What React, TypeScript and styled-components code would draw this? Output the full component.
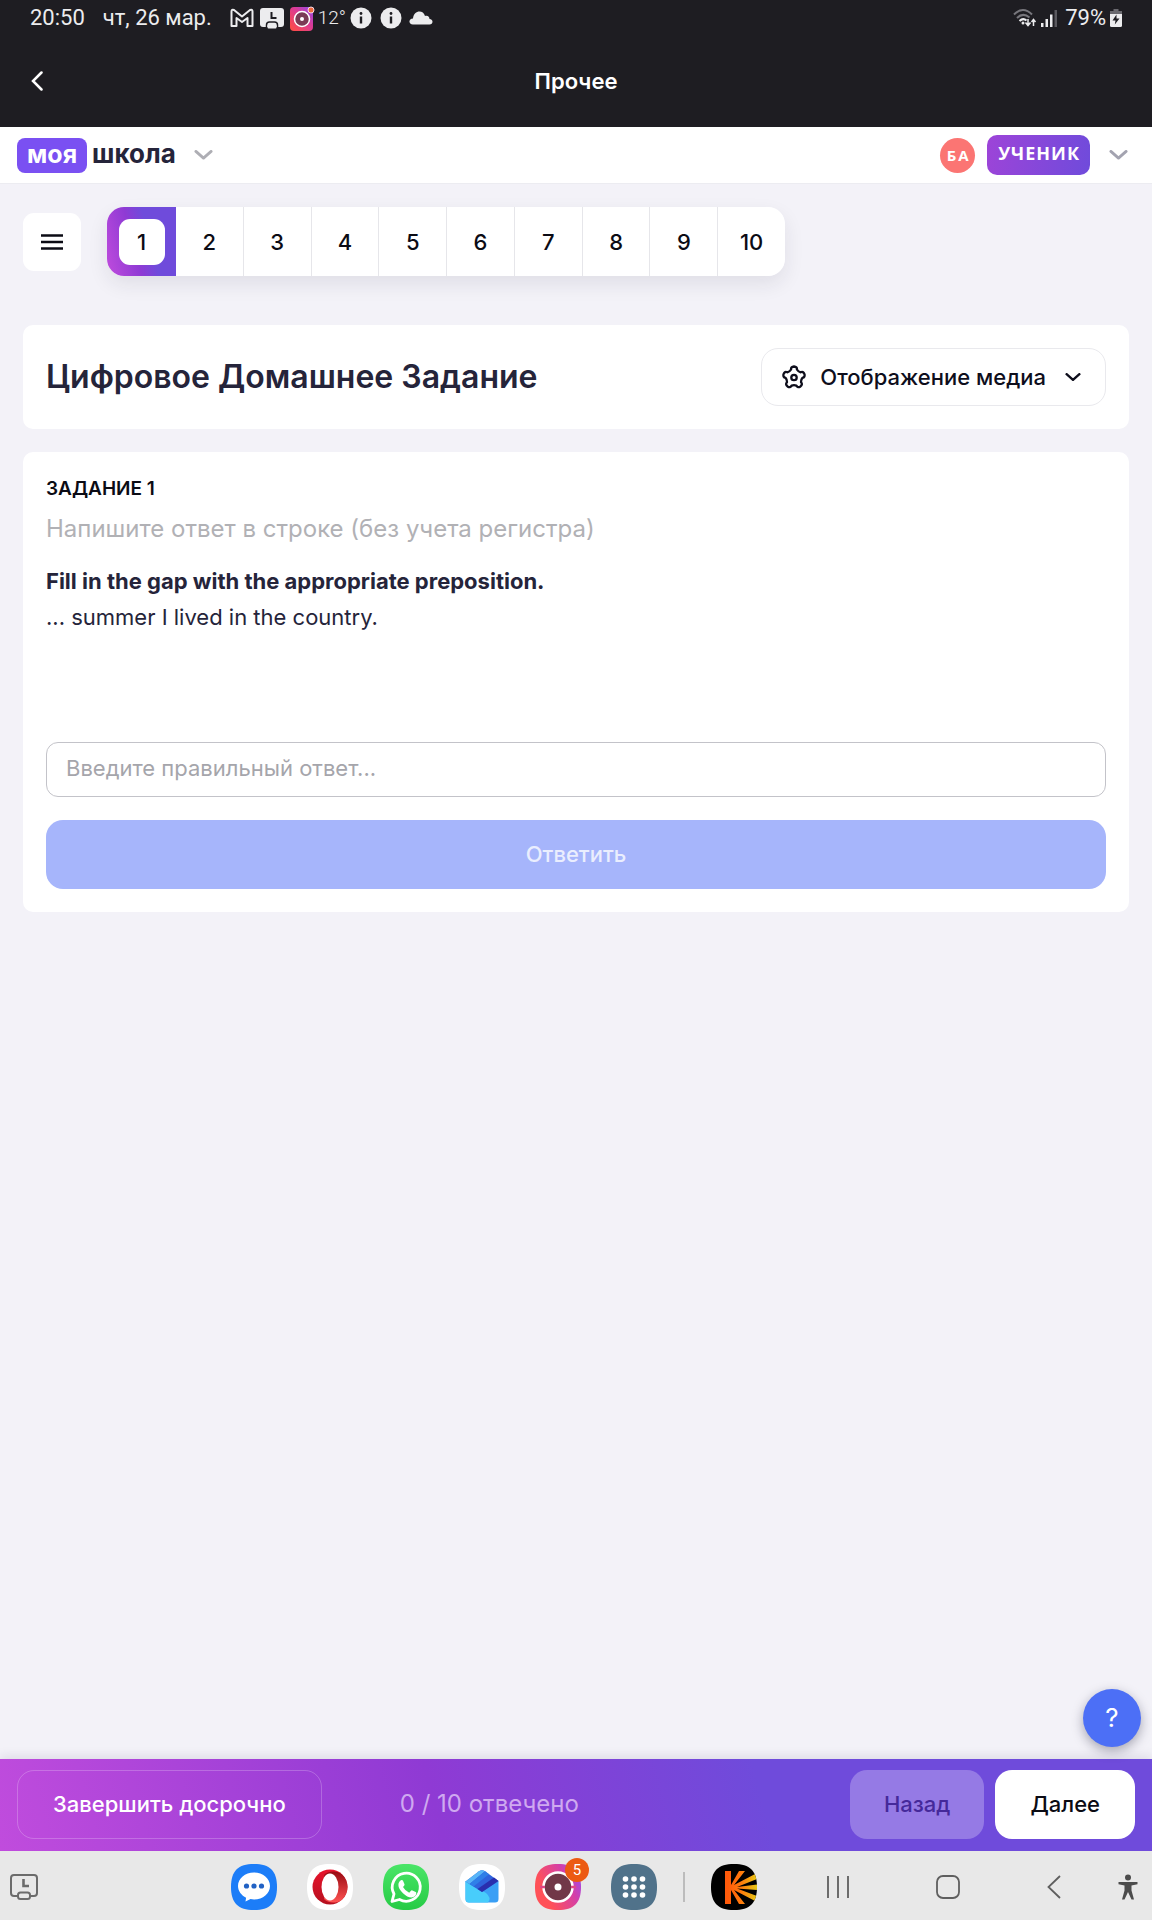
import React, { useState } from "react";
import styled, { createGlobalStyle, css } from "styled-components";

const violet = "linear-gradient(75deg, #c04cdd 0%, #8f3ad4 38%, #6f4bdb 66%, #6f4bdb 100%)";

const GlobalStyle = createGlobalStyle`
  *, *::before, *::after { box-sizing: border-box; }
  body { margin: 0; background: #f3f2f8; }
  button, input { font: inherit; color: inherit; margin: 0; }
  button { border: 0; background: none; padding: 0; cursor: pointer; }
  svg { display: block; flex: none; }
`;

const Page = styled.div`
  min-height: 100vh;
  display: flex;
  flex-direction: column;
  background: #f3f2f8;
  color: #25243a;
  font-family: Inter, "Noto Sans", sans-serif;
  font-size: 22px;
  line-height: 36px;
`;

const StatusBar = styled.div`
  display: flex;
  justify-content: space-between;
  align-items: center;
  height: 36px;
  padding: 0 30px;
  background: #1e1d22;
  color: #ececee;
  font-family: Roboto, sans-serif;
  font-size: 22px;
  line-height: 36px;
`;

const StatusGroup = styled.div<{ $gap: number }>`
  display: flex;
  align-items: center;
  gap: ${(p) => p.$gap}px;
`;

const DateText = styled.span`
  margin: 0 12px;
`;

const Temperature = styled.span`
  margin: 0 -3px;
  font-weight: 300;
  font-size: 19px;
`;

const Charge = styled.span`
  margin-left: 4px;
`;

const AppBar = styled.header`
  display: grid;
  grid-template-columns: 48px 1fr 48px;
  align-items: center;
  height: 91px;
  padding: 0 13px 2px;
  background: #1e1d22;
  color: #fff;
`;

const AppTitle = styled.div`
  text-align: center;
  font-weight: 600;
`;

const IconButton = styled.button`
  display: grid;
  place-items: center;
  height: 48px;
`;

const SiteBar = styled.div`
  display: flex;
  align-items: center;
  justify-content: space-between;
  height: 57px;
  padding: 0 24px 0 17px;
  background: #fff;
  border-bottom: 1px solid #ececf1;
`;

const Cluster = styled.div<{ $gap: number }>`
  display: flex;
  align-items: center;
  gap: ${(p) => p.$gap}px;
`;

const Logo = styled.a`
  display: flex;
  align-items: center;
  gap: 5px;
  color: #25243a;
  font-weight: 700;
  font-size: 26px;
  line-height: 32px;
  text-decoration: none;
`;

const LogoMark = styled.span`
  height: 35px;
  padding: 0 10px;
  border-radius: 8px;
  background: #7a50f2;
  color: #fff;
  font-size: 25px;
`;

const LogoWord = styled.span`
  height: 35px;
`;

const Avatar = styled.span`
  display: grid;
  place-items: center;
  width: 35px;
  height: 35px;
  padding-left: 2px;
  border-radius: 50%;
  background: #fb7573;
  color: #fff;
  font: 700 15px/35px "Open Sans", sans-serif;
  letter-spacing: 2px;
`;

const Role = styled.span`
  height: 40px;
  padding: 0 10px 0 11px;
  border-radius: 10px;
  background: linear-gradient(100deg, #9d44d8, #6f4bdb);
  color: #fff;
  font: 700 18px/36px "Open Sans", sans-serif;
  letter-spacing: 1px;
`;

const Main = styled.main`
  flex: 1;
  display: flex;
  flex-direction: column;
  padding: 23px;
`;

const Toolbar = styled.div`
  display: flex;
  align-items: center;
  gap: 26px;
  margin-bottom: 49px;
`;

const MenuButton = styled.button`
  display: grid;
  place-items: center;
  width: 58px;
  height: 58px;
  border-radius: 11px;
  background: #fff;
`;

const PagerShadow = styled.div`
  flex: 0 1 678px;
  border-radius: 17px;
  box-shadow: 0 8px 20px rgba(30, 30, 60, 0.09);
`;

const Pager = styled.nav`
  display: flex;
  overflow: hidden;
  border-radius: 17px;
  background: #fff;
`;

const PageCell = styled.button<{ $active: boolean }>`
  flex: 1 1 0;
  display: grid;
  place-items: center;
  height: 69px;
  color: #0b0b14;
  font-weight: 500;
  border-right: 1px solid #e6e6ea;
  &:last-child { border-right: 0; }
  ${(p) =>
    p.$active &&
    css`
      flex: 0 0 69px;
      border-right: 0;
      background: linear-gradient(75deg, #c04cdd 0%, #8f3ad4 40%, #6f4bdb 60%);
    `}
`;

const PageNumber = styled.span`
  width: 46px;
  border-radius: 11px;
  line-height: 46px;
  background: #fff;
`;

const Card = styled.section`
  padding: 23px;
  border-radius: 10px;
  background: #fff;
`;

const TitleCard = styled(Card)`
  display: flex;
  align-items: center;
  justify-content: space-between;
  margin-bottom: 23px;
`;

const Title = styled.h1`
  margin: 0;
  font-size: 32px;
  line-height: 40px;
  font-weight: 600;
`;

const MediaButton = styled.button`
  display: flex;
  align-items: center;
  gap: 14px;
  height: 58px;
  padding: 0 24px 0 20px;
  border: 1px solid #e9e9ed;
  border-radius: 17px;
  color: #0e0e1c;
  font-weight: 500;
`;

const MediaLabel = styled.span`
  margin-right: 5px;
`;

const TaskLabel = styled.h2`
  margin: 0;
  color: #0b0b14;
  font-size: 19px;
  line-height: 28px;
  font-weight: 600;
`;

const Hint = styled.p`
  margin: 8px 0 16px;
  color: #b1b1b5;
  font-size: 24px;
`;

const Question = styled.div`
  min-height: 179px;
`;

const Answer = styled.input`
  display: block;
  width: 100%;
  height: 55px;
  padding: 0 19px 3px;
  border: 1px solid #c3c3c9;
  border-radius: 12px;
  background: #fff;
  outline: none;
  &::placeholder { color: #a5a5ab; opacity: 1; }
`;

const Submit = styled.button`
  width: 100%;
  height: 69px;
  margin-top: 23px;
  padding-bottom: 2px;
  border-radius: 17px;
  background: #a6b5fb;
  color: #eaeefe;
  font-weight: 500;
`;

const Dock = styled.div`
  position: sticky;
  bottom: 0;
`;

const Help = styled.button`
  position: absolute;
  right: 11px;
  bottom: 173px;
  width: 58px;
  height: 58px;
  border-radius: 50%;
  background: #4c6ff6;
  color: #fff;
  font-size: 26px;
  box-shadow: 0 4px 12px rgba(20, 20, 50, 0.35);
`;

const ActionBar = styled.footer`
  display: flex;
  align-items: center;
  justify-content: space-between;
  height: 92px;
  padding: 0 17px 2px;
  background: ${violet};
  box-shadow: 0 -3px 10px rgba(40, 30, 80, 0.1);
`;

const ActionButton = styled.button<{ $kind: "outline" | "faded" | "solid" }>`
  height: 69px;
  padding: 0 35px;
  border-radius: 17px;
  font-weight: 500;
  ${(p) => p.$kind === "outline" && css`border: 1px solid rgba(255, 255, 255, 0.22); color: #fff;`}
  ${(p) => p.$kind === "faded" && css`padding: 0 34px; background: #957ae5; color: #45299a;`}
  ${(p) => p.$kind === "solid" && css`background: #fff; color: #0b0b14;`}
`;

const Counter = styled.span`
  color: #cfa9f0;
  font-size: 24px;
`;

const SystemBar = styled.nav`
  display: grid;
  grid-template-columns: 1fr auto auto;
  align-items: center;
  height: 69px;
  padding: 2px 14px 0 9px;
  background: #e8e8e8;
`;

const Apps = styled.div`
  display: flex;
  align-items: center;
  gap: 30px;
`;

const AppIcon = styled.button`
  position: relative;
  width: 46px;
  height: 46px;
`;

const Badge = styled.span`
  position: absolute;
  top: -6px;
  right: -8px;
  width: 24px;
  height: 24px;
  border-radius: 50%;
  background: #ec5a12;
  color: #fff;
  font: 400 15px/24px Roboto, sans-serif;
  text-align: center;
`;

const Divider = styled.span`
  width: 2px;
  height: 30px;
  margin: 0 -4px;
  background: #bcbcbc;
`;

const Keys = styled.div`
  display: flex;
  align-items: center;
  gap: 57px;
  padding-left: 70px;
`;

const squircle = "M23 0C39 0 46 7 46 23S39 46 23 46 0 39 0 23 7 0 23 0Z";

function Chevron({ size, color, width = 3 }: { size: number; color: string; width?: number }) {
  return (
    <svg width={size} height={size / 2} viewBox="0 0 20 10" fill="none" stroke={color} strokeWidth={width} strokeLinecap="round" strokeLinejoin="round">
      <path d="M2 1.5 10 8.5 18 1.5" />
    </svg>
  );
}

function Gmail() {
  return (
    <svg width="24" height="20" viewBox="0 0 24 20" fill="none" stroke="#ececee" strokeWidth="2" strokeLinejoin="round">
      <path d="M1.500 18V3.500Q1.500 1 4 2L12 8.500 20 2Q22.500 1 22.500 3.500V18H17.500V10L12 14 6.500 10V18Z" />
    </svg>
  );
}

function ScreenNote() {
  return (
    <svg width="24" height="21" viewBox="0 0 24 21">
      <rect x="0" y="0" width="24" height="19" rx="3" fill="#ececee" />
      <path d="M11.500 4v6h5" fill="none" stroke="#1e1d22" strokeWidth="2" />
      <path d="M6.500 19v-2q0-3 3-3h5q3 0 3 3v2" fill="#ececee" stroke="#1e1d22" strokeWidth="1.500" />
      <rect x="7.500" y="17" width="9" height="3.500" rx="1" fill="#ececee" />
    </svg>
  );
}

function CameraMini() {
  return (
    <svg width="25" height="25" viewBox="0 0 25 25">
      <defs>
        <linearGradient id="mini" x1="0" y1="1" x2="1" y2="0">
          <stop offset="0.1" stopColor="#fb4a4c" />
          <stop offset="0.600" stopColor="#d83a9a" />
          <stop offset="1" stopColor="#8a4df0" />
        </linearGradient>
      </defs>
      <rect x="0" y="1" width="23" height="24" rx="4" fill="url(#mini)" />
      <circle cx="12" cy="13" r="7.500" fill="#7a3b55" stroke="#fff" strokeWidth="1.500" />
      <circle cx="12" cy="13" r="2" fill="#fff" />
      <circle cx="21" cy="4" r="3" fill="#ee6a3d" stroke="#f6d9e6" strokeWidth="1" />
    </svg>
  );
}

function Info() {
  return (
    <svg width="24" height="22" viewBox="-1 0 24 22">
      <circle cx="11" cy="11" r="10.500" fill="#ececee" />
      <circle cx="11" cy="6.500" r="1.400" fill="#1e1d22" />
      <path d="M11 9.500v7" stroke="#1e1d22" strokeWidth="2.400" />
    </svg>
  );
}

function Cloud() {
  return (
    <svg width="24" height="14" viewBox="0 0 24 14" fill="#ececee">
      <path d="M4 13.500C-1 13.500-.5 7.500 4 7.500 4.500-.5 14-2 16 5c3-.8 4.500 1 4.500 3C25 8.500 24 13.500 20.500 13.500Z" />
    </svg>
  );
}

function Wifi() {
  return (
    <svg width="24" height="18" viewBox="0 0 24 18" fill="none" strokeWidth="2">
      <path d="M1 5.500Q10-3.500 19 5.500M4 9Q10 3 16.500 8.500" stroke="#77767c" />
      <path d="M6.500 12Q10 8.500 13.500 11.500" stroke="#ececee" />
      <circle cx="10" cy="14" r="1.500" fill="#ececee" />
      <path d="M15 10v6M12.500 13.500l2.500 3 2.500-3M20.500 17v-6M18.500 13l2-2.500 2 2.500" stroke="#ececee" strokeWidth="1.500" />
    </svg>
  );
}

function Signal() {
  return (
    <svg width="16" height="17" viewBox="0 0 16 17">
      <path d="M0 13h2.500v4H0zM4.500 9H7v8H4.500zM9 4.500h2.500V17H9z" fill="#ececee" />
      <path d="M13.500 0H16v17h-2.500z" fill="#5a595f" />
    </svg>
  );
}

function Battery() {
  return (
    <svg width="12" height="18" viewBox="0 0 12 18">
      <path d="M3.500 0h5v2H12v4H0V2h3.500z" fill="#6a696f" />
      <path d="M0 5h12v11.500q0 1.500-1.500 1.500h-9Q0 18 0 16.500z" fill="#ececee" />
      <path d="M6.500 5.500 2.500 11.500H5.500L4.800 15.500 9.500 9.500H6.500Z" fill="#1e1d22" />
    </svg>
  );
}

function Gear() {
  const points = Array.from({ length: 5 }, (_, i) => i * 72);
  return (
    <svg width="24" height="24" viewBox="0 0 24 24" fill="none" stroke="#0e0e1c" strokeWidth="2.300" strokeLinejoin="round">
      <path
        d={points
          .map((deg, i) => {
            const at = (r: number, a: number) => {
              const t = ((deg + a - 90) * Math.PI) / 180;
              return `${(12 + r * Math.cos(t)).toFixed(2)} ${(12.5 + r * Math.sin(t)).toFixed(2)}`;
            };
            return `${i === 0 ? "M" : "L"}${at(8.5, -20)}Q${at(11.2, -17)} ${at(11, 0)}Q${at(11.2, 17)} ${at(8.5, 20)}Q${at(7.2, 36)} ${at(8.5, 52)}`;
          })
          .join("") + "Z"}
      />
      <circle cx="12" cy="12.500" r="2.700" />
    </svg>
  );
}

function ScreenTool() {
  return (
    <svg width="30" height="28" viewBox="0 0 30 28" fill="none" stroke="#6b6b6b" strokeWidth="2">
      <path d="M9 23H5q-3 0-3-3V5q0-3 3-3h20q3 0 3 3v15q0 3-3 3h-4" />
      <rect x="9" y="19.500" width="12" height="6.500" rx="2.500" />
      <path d="M14.500 6v7h5.500" strokeWidth="2.600" />
    </svg>
  );
}

function Messages() {
  return (
    <svg width="46" height="46" viewBox="0 0 46 46">
      <path d={squircle} fill="#1c7df8" />
      <path d="M23 8.500c9 0 16 6 16 13.500S32 35.500 23 35.500q-2 0-3.500-.4L14.500 37.500l.6-3.800C10.500 31.500 7 27 7 22 7 14.500 14 8.500 23 8.500Z" fill="#fff" />
      <circle cx="15.500" cy="22" r="2.600" fill="#2262c4" />
      <circle cx="23" cy="22" r="2.600" fill="#2262c4" />
      <circle cx="30.500" cy="22" r="2.600" fill="#2262c4" />
    </svg>
  );
}

function Opera() {
  return (
    <svg width="46" height="46" viewBox="0 0 46 46">
      <defs>
        <linearGradient id="operaRing" x1="0" y1="0" x2="0" y2="1">
          <stop offset="0" stopColor="#e8142c" />
          <stop offset="1" stopColor="#b5101f" />
        </linearGradient>
        <linearGradient id="operaSide" x1="0" y1="0" x2="0" y2="1">
          <stop offset="0" stopColor="#980a12" />
          <stop offset="1" stopColor="#ff5352" />
        </linearGradient>
      </defs>
      <path d={squircle} fill="#fff" />
      <circle cx="23" cy="23" r="17.500" fill="url(#operaRing)" />
      <path d="M17 11C20.500 7 29 6 34.700 10a17.500 17.500 0 0 1 0 26C29 40 20.500 39 17 35Z" fill="url(#operaSide)" />
      <ellipse cx="23" cy="23" rx="8.500" ry="13.500" fill="#fff" />
    </svg>
  );
}

function WhatsApp() {
  return (
    <svg width="46" height="46" viewBox="0 0 46 46">
      <defs>
        <linearGradient id="waBg" x1="0" y1="0" x2="0" y2="1">
          <stop offset="0" stopColor="#4ae568" />
          <stop offset="1" stopColor="#26cb45" />
        </linearGradient>
      </defs>
      <path d={squircle} fill="url(#waBg)" />
      <path d="M9 37.500 11 30A14 14 0 1 1 16.500 35.500Z" fill="none" stroke="#fff" strokeWidth="2.800" strokeLinejoin="round" />
      <path d="M18.500 16q1-.3 1.500.7l1.500 3.500q.2.800-.4 1.500l-1.100 1.400q2.200 4 6.200 5.600l1.800-2q.6-.6 1.400-.2l3.300 1.600q.8.500.6 1.400-.8 3.700-4.800 3.900-4 .1-8.500-4.200-4.600-4.500-4.600-8.200 0-3.700 3.100-5Z" fill="#fff" />
    </svg>
  );
}

function Mail() {
  return (
    <svg width="46" height="46" viewBox="0 0 46 46">
      <path d={squircle} fill="#fff" />
      <path d="M6.500 17 23 26 39.500 17V35q0 3.500-3.500 3.500H10Q6.500 38.500 6.500 35Z" fill="#3a9ff5" />
      <path d="M6.500 17 27 29q6 5 2 9.500H10Q6.500 38.500 6.500 35Z" fill="#48cdfb" />
      <path d="M6.500 17.500 20 7.300q3-2 6 0L39.500 17 23 28Z" fill="#2f63dc" />
      <path d="M6.500 17.500 20 7.300q3-2 6 0L10.500 20Z" fill="#58b5f7" />
      <path d="M10.500 20 26 7.300 30 10.200 14.500 22.500Z" fill="#2f7fe8" />
      <path d="M18.500 25 35 13.500 39.500 17 23 28Z" fill="#2a2fae" />
    </svg>
  );
}

function Camera() {
  return (
    <svg width="46" height="46" viewBox="0 0 46 46">
      <defs>
        <linearGradient id="camBg" x1="0" y1="0.700" x2="1" y2="0.200">
          <stop offset="0.200" stopColor="#ff5158" />
          <stop offset="0.700" stopColor="#d43fa8" />
          <stop offset="1" stopColor="#9a4df0" />
        </linearGradient>
      </defs>
      <path d={squircle} fill="url(#camBg)" />
      <circle cx="23" cy="23" r="14.500" fill="#713848" stroke="#fff" strokeWidth="2.500" />
      <path d="M5 23h5M36 23h5" stroke="#e04887" strokeWidth="2.500" />
      <circle cx="23" cy="23" r="3.500" fill="#fff" />
    </svg>
  );
}

function Drawer() {
  return (
    <svg width="46" height="46" viewBox="0 0 46 46">
      <path d={squircle} fill="#50728a" />
      {[15, 23, 31].flatMap((y) => [14.5, 23, 31.5].map((x) => <circle key={`${x}-${y}`} cx={x} cy={y} r="2.800" fill="#fff" />))}
    </svg>
  );
}

function Rays() {
  return (
    <svg width="46" height="46" viewBox="0 0 46 46">
      <defs>
        <clipPath id="raysClip"><path d={squircle} /></clipPath>
        <linearGradient id="raysFill" x1="14" y1="0" x2="46" y2="0" gradientUnits="userSpaceOnUse">
          <stop offset="0.100" stopColor="#ff5a0a" />
          <stop offset="0.500" stopColor="#ff7a0c" />
          <stop offset="1" stopColor="#e6c814" />
        </linearGradient>
      </defs>
      <path d={squircle} fill="#000" />
      <g clipPath="url(#raysClip)" fill="url(#raysFill)">
        <path d="M14 7h6v14L28 7h6L23 21 46 9v6L26 23 46 20.500v5.500L26 24.500 46 32v6L23 26 34 40h-6L20 26v14h-6Z" />
      </g>
    </svg>
  );
}

const apps = [
  { name: "Сообщения", icon: <Messages /> },
  { name: "Opera", icon: <Opera /> },
  { name: "WhatsApp", icon: <WhatsApp /> },
  { name: "Почта", icon: <Mail /> },
  { name: "Камера", icon: <Camera />, badge: 5 },
  { name: "Все приложения", icon: <Drawer /> },
];

export default function App() {
  const [page, setPage] = useState(1);
  const [answer, setAnswer] = useState("");
  const total = 10;

  return (
    <Page>
      <GlobalStyle />
      <StatusBar>
        <StatusGroup $gap={6}>
          <span>20:50</span>
          <DateText>чт, 26 мар.</DateText>
          <Gmail />
          <ScreenNote />
          <CameraMini />
          <Temperature>12°</Temperature>
          <Info />
          <Info />
          <Cloud />
        </StatusGroup>
        <StatusGroup $gap={4}>
          <Wifi />
          <Signal />
          <Charge>79%</Charge>
          <Battery />
        </StatusGroup>
      </StatusBar>

      <AppBar>
        <IconButton aria-label="Назад">
          <svg width="12" height="20" viewBox="0 0 12 20" fill="none" stroke="#fff" strokeWidth="2.500" strokeLinecap="round">
            <path d="M10.500 1.500 2 10l8.500 8.500" />
          </svg>
        </IconButton>
        <AppTitle>Прочее</AppTitle>
      </AppBar>

      <SiteBar>
        <Cluster $gap={18}>
          <Logo href="#">
            <LogoMark>моя</LogoMark>
            <LogoWord>школа</LogoWord>
          </Logo>
          <Chevron size={19} color="#aeaeb4" />
        </Cluster>
        <Cluster $gap={12}>
          <Avatar>БА</Avatar>
          <Cluster $gap={19}>
            <Role>УЧЕНИК</Role>
            <Chevron size={19} color="#a3a3b0" />
          </Cluster>
        </Cluster>
      </SiteBar>

      <Main>
        <Toolbar>
          <MenuButton aria-label="Меню">
            <svg width="22" height="16" viewBox="0 0 22 16" stroke="#0b0b14" strokeWidth="2.300">
              <path d="M0 1.500h22M0 8h22M0 14.500h22" />
            </svg>
          </MenuButton>
          <PagerShadow>
            <Pager aria-label="Задания">
              {Array.from({ length: total }, (_, i) => i + 1).map((n) => (
                <PageCell key={n} $active={n === page} onClick={() => setPage(n)}>
                  <PageNumber>{n}</PageNumber>
                </PageCell>
              ))}
            </Pager>
          </PagerShadow>
        </Toolbar>

        <TitleCard>
          <Title>Цифровое Домашнее Задание</Title>
          <MediaButton>
            <Gear />
            <MediaLabel>Отображение медиа</MediaLabel>
            <Chevron size={16} color="#0e0e1c" />
          </MediaButton>
        </TitleCard>

        <Card>
          <TaskLabel>ЗАДАНИЕ 1</TaskLabel>
          <Hint>Напишите ответ в строке (без учета регистра)</Hint>
          <Question>
            <strong>Fill in the gap with the appropriate preposition.</strong>
            <div>... summer I lived in the country.</div>
          </Question>
          <Answer
            aria-label="Ответ"
            placeholder="Введите правильный ответ..."
            value={answer}
            onChange={(e) => setAnswer(e.target.value)}
          />
          <Submit>Ответить</Submit>
        </Card>
      </Main>

      <Dock>
        <ActionBar>
          <Cluster $gap={78}>
            <ActionButton $kind="outline">Завершить досрочно</ActionButton>
            <Counter>0 / 10 отвечено</Counter>
          </Cluster>
          <Cluster $gap={11}>
            <ActionButton $kind="faded">Назад</ActionButton>
            <ActionButton $kind="solid">Далее</ActionButton>
          </Cluster>
        </ActionBar>
        <Help aria-label="Помощь">?</Help>
        <SystemBar>
          <ScreenTool />
          <Apps>
            {apps.map((a) => (
              <AppIcon key={a.name} aria-label={a.name}>
                {a.icon}
                {a.badge && <Badge>{a.badge}</Badge>}
              </AppIcon>
            ))}
            <Divider />
            <AppIcon aria-label="Кино"><Rays /></AppIcon>
          </Apps>
          <Keys>
            <Cluster $gap={87}>
              <IconButton aria-label="Недавние">
                <svg width="22" height="24" viewBox="0 0 22 24" stroke="#5f5f5f" strokeWidth="1.800"><path d="M1 1v22M11 1v22M21 1v22" /></svg>
              </IconButton>
              <IconButton aria-label="Домой">
                <svg width="24" height="24" viewBox="0 0 24 24" fill="none" stroke="#5f5f5f" strokeWidth="1.800"><rect x="1" y="1" width="22" height="22" rx="6" /></svg>
              </IconButton>
              <IconButton aria-label="Вернуться">
                <svg width="14" height="24" viewBox="0 0 14 24" fill="none" stroke="#5f5f5f" strokeWidth="1.800"><path d="M13 1 1.500 12 13 23" /></svg>
              </IconButton>
            </Cluster>
            <IconButton aria-label="Специальные возможности">
              <svg width="20" height="26" viewBox="0 0 20 26" fill="#4c4c4c">
                <circle cx="10" cy="3.500" r="3" />
                <path d="M.5 8h19v2.300L13.500 11.500v5l2.500 9h-2.500L10 18 6.500 25.500H4L6.500 16.500v-5L.5 10.300Z" />
              </svg>
            </IconButton>
          </Keys>
        </SystemBar>
      </Dock>
    </Page>
  );
}
